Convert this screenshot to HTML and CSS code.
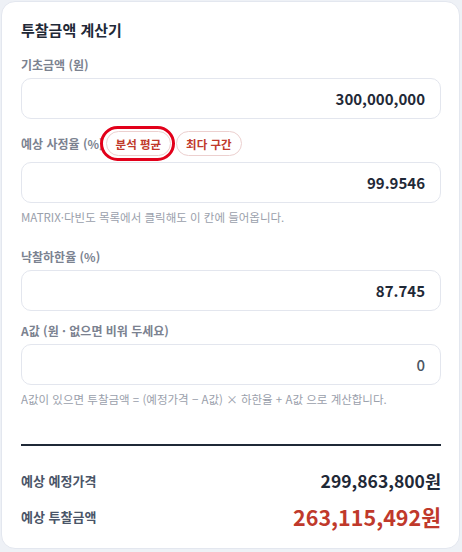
FILE: index.html
```html
<!DOCTYPE html>
<html lang="ko">
<head>
<meta charset="utf-8">
<link rel="stylesheet" href="styles.css">
</head>
<body>
<div class="card">
  <h2 class="title">투찰금액 계산기</h2>

  <div class="field field-first">
    <div class="label">기초금액 (원)</div>
    <div class="input"><span class="val">300,000,000</span></div>
  </div>

  <div class="field">
    <div class="label-row">
      <span class="label">예상 사정율 (%)</span>
      <span class="chip">분석 평균<span class="mark"></span></span>
      <span class="chip">최다 구간</span>
    </div>
    <div class="input"><span class="val">99.9546</span></div>
    <div class="hint hint-gap">MATRIX·다빈도 목록에서 클릭해도 이 칸에 들어옵니다.</div>
  </div>

  <div class="field">
    <div class="label">낙찰하한율 (%)</div>
    <div class="input"><span class="val">87.745</span></div>
  </div>

  <div class="field">
    <div class="label">A값 (원 · 없으면 비워 두세요)</div>
    <div class="input"><span class="val val-light">0</span></div>
    <div class="hint">A값이 있으면 투찰금액 = (예정가격 − A값) × 하한율 + A값 으로 계산합니다.</div>
  </div>

  <div class="divider"></div>

  <div class="result result-first">
    <span class="r-label">예상 예정가격</span>
    <span class="r-val">299,863,800원</span>
  </div>
  <div class="result result-second">
    <span class="r-label">예상 투찰금액</span>
    <span class="r-val r-big">263,115,492원</span>
  </div>
</div>
</body>
</html>
```

FILE: styles.css
```css
* { box-sizing: border-box; }
html, body {
  margin: 0;
  padding: 0;
  background: #eef1f6;
}
body {
  padding: 1px 2px 2px 1px;
  font-family: "Noto Sans CJK KR", "Noto Sans", sans-serif;
  color: #1f2937;
}
.card {
  display: flex;
  flex-direction: column;
  background: #ffffff;
  border: 1px solid #e3e7ef;
  border-radius: 14px;
  padding: 17px 18px 15px 19px;
  height: 548px;
}
.title {
  margin: 0;
  font-size: 15px;
  line-height: 22px;
  font-weight: 700;
  color: #1f2937;
}
.field {
  display: flex;
  flex-direction: column;
  margin-top: 11px;
}
.field-first { margin-top: 15px; }
.label {
  display: block;
  font-size: 12px;
  line-height: 18px;
  font-weight: 600;
  color: #7b8290;
  margin-bottom: 4px;
}
.label-row {
  display: flex;
  align-items: center;
  gap: 5px;
  margin-top: 1px;
  margin-bottom: 6px;
}
.label-row .label { margin-bottom: 0; margin-right: -3px; }
.chip {
  position: relative;
  display: inline-flex;
  align-items: center;
  height: 25px;
  padding: 0 9px;
  border: 1px solid #ecd0cf;
  border-radius: 13px;
  background: #ffffff;
  color: #c0392b;
  font-size: 11.5px;
  font-weight: 700;
}
.mark {
  position: absolute;
  left: -7px;
  right: -5px;
  top: -6px;
  bottom: -6px;
  border: 3px solid #e2001a;
  border-radius: 20px;
}
.input {
  display: flex;
  align-items: center;
  justify-content: flex-end;
  height: 41px;
  border: 1px solid #e3e6ee;
  border-radius: 10px;
  padding: 0 15px;
  background: #ffffff;
}
.val {
  font-size: 15px;
  font-weight: 700;
  color: #1f2937;
}
.val-light {
  font-weight: 500;
  color: #4b5563;
}
.hint {
  margin-top: 6px;
  font-size: 11.5px;
  line-height: 17px;
  color: #9aa0ab;
}
.hint-gap { margin-bottom: 11px; }
.divider {
  margin-top: 36px;
  height: 2px;
  flex: none;
  background: #1f2937;
}
.result {
  display: flex;
  align-items: center;
  justify-content: space-between;
}
.result-first { margin-top: 21px; height: 26px; }
.result-second { margin-top: 7px; height: 32px; }
.r-label {
  font-size: 13px;
  font-weight: 700;
  color: #4a5568;
}
.r-val {
  font-size: 17.5px;
  font-weight: 700;
  color: #1f2937;
}
.r-big {
  font-size: 21.5px;
  color: #c0392b;
}
```
